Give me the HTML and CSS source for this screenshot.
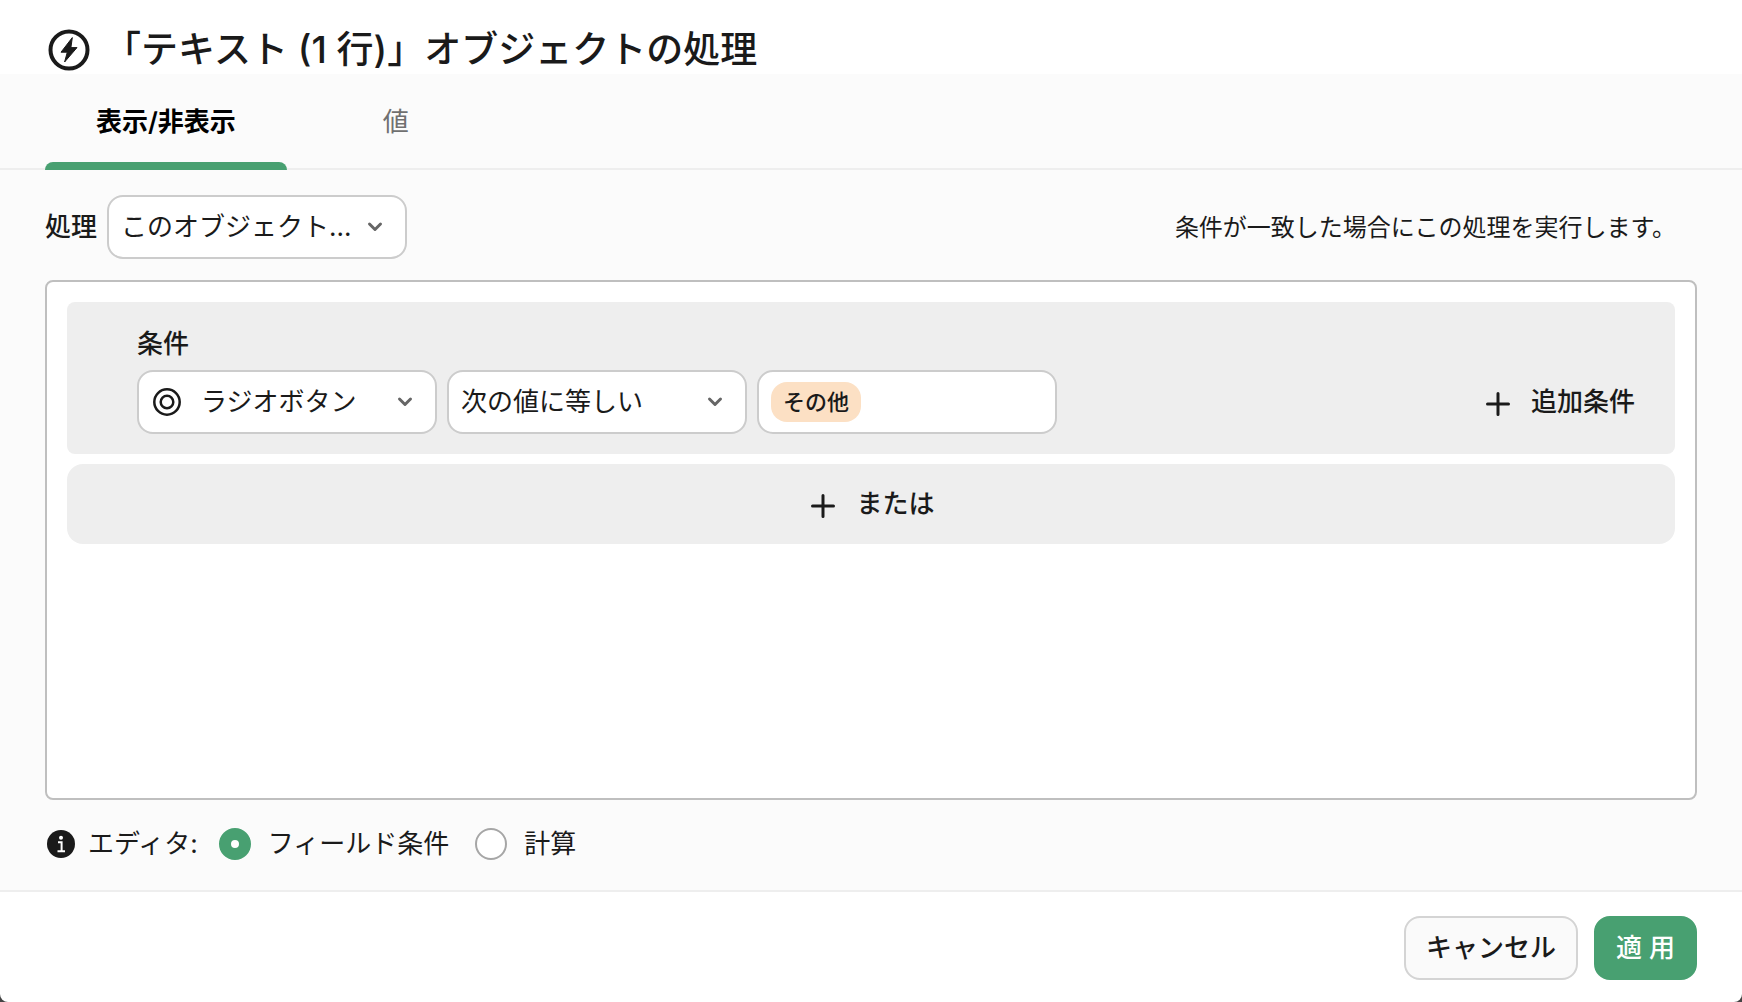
FILE: index.html
```html
<!DOCTYPE html>
<html lang="ja">
<head>
    <meta charset="UTF-8">
    <meta name="viewport" content="width=device-width, initial-scale=1.0">
    <title>オブジェクトの処理</title>
    <link rel="stylesheet" href="styles.css">
</head>
<body>
    <form class="dialog">
        <header class="dialogHeader">
            <svg class="titleIcon" viewBox="0 0 42 42" aria-hidden="true">
                <circle cx="21" cy="21" r="18.5" fill="none" stroke="currentColor" stroke-width="4"/>
                <path d="M24.3 8.6 13 23.2h6.3L16.6 33 29 18.6h-6.1z" fill="currentColor" stroke="currentColor" stroke-width="1" stroke-linejoin="round"/>
            </svg>
            <h1>「テキスト (1 行)」オブジェクトの処理</h1>
        </header>

        <nav class="tabs">
            <button type="button" class="tab activeTab">表示/非表示</button>
            <button type="button" class="tab">値</button>
        </nav>

        <main class="content">
            <div class="actionRow">
                <label for="action">処理</label>
                <div class="field">
                    <select id="action"><option>このオブジェクト...</option></select>
                    <svg class="chevron" viewBox="0 0 16 12" aria-hidden="true"><path d="M2.5 3 8 8.5 13.5 3"/></svg>
                </div>
                <p>条件が一致した場合にこの処理を実行します。</p>
            </div>

            <section class="conditions">
                <div class="group">
                    <label for="source">条件</label>
                    <div class="groupRow">
                        <div class="field">
                            <svg class="ringIcon" viewBox="0 0 28 28" aria-hidden="true"><circle cx="14" cy="14" r="12.7"/><circle cx="14" cy="14" r="6.3"/></svg>
                            <select id="source"><option>ラジオボタン</option></select>
                            <svg class="chevron" viewBox="0 0 16 12" aria-hidden="true"><path d="M2.5 3 8 8.5 13.5 3"/></svg>
                        </div>
                        <div class="field">
                            <select aria-label="比較"><option>次の値に等しい</option></select>
                            <svg class="chevron" viewBox="0 0 16 12" aria-hidden="true"><path d="M2.5 3 8 8.5 13.5 3"/></svg>
                        </div>
                        <div class="field">
                            <span class="tag">その他</span>
                            <input type="text" aria-label="値">
                        </div>
                        <button type="button" class="addBtn">
                            <svg viewBox="0 0 32 32" aria-hidden="true"><path d="M16 7.500v21M5.500 18h21"/></svg>
                            追加条件
                        </button>
                    </div>
                </div>
                <button type="button" class="addBtn orBtn">
                    <svg viewBox="0 0 32 32" aria-hidden="true"><path d="M16 7.500v21M5.500 18h21"/></svg>
                    または
                </button>
            </section>

            <div class="editorRow">
                <svg class="infoIcon" viewBox="0 0 28 28" aria-hidden="true">
                    <circle cx="14" cy="14" r="14" fill="#1a1a1a"/>
                    <circle cx="14" cy="7.800" r="2" fill="#fff"/>
                    <path d="M11 12.300h3.600v9M10.500 21.300h7.500" fill="none" stroke="#fff" stroke-width="2"/>
                </svg>
                <span class="editorLabel">エディタ:</span>
                <label><input type="radio" name="editor" checked>フィールド条件</label>
                <label><input type="radio" name="editor">計算</label>
            </div>
        </main>

        <footer class="dialogFooter">
            <button type="button" class="btn">キャンセル</button>
            <button type="submit" class="btn primaryBtn">適 用</button>
        </footer>
    </form>
</body>
</html>
```
FILE: styles.css
```css
*{margin: 0; padding: 0; box-sizing: border-box;}
body{background-color: #444; color: #1a1a1a; font-family: Inter, "Noto Sans CJK JP", sans-serif; font-size: 26px; line-height: 40px;}
button, input, select{font: inherit; color: inherit; background: none; border: none; outline: none;}
button, select{cursor: pointer;}
svg{flex: none; display: block;}

.dialog{min-height: 100vh; display: flex; flex-direction: column; background-color: #fff; border-radius: 0 0 8px 8px; overflow: hidden;}
.dialogHeader{height: 74px; padding: 26px 44px 0 48px; display: flex; align-items: center; gap: 14px;}
.dialogHeader h1{font-size: 37px; font-weight: 500; line-height: 48px;}
.titleIcon{width: 42px; height: 42px;}

.tabs{height: 96px; padding: 0 45px; display: flex; gap: 45px; background-color: #fbfbfb; box-shadow: inset 0 -2px #eee;}
.tab{padding: 0 51px; color: #707070; position: relative;}
.activeTab{color: #000; font-weight: 600;}
.activeTab::after{content: ""; position: absolute; left: 0; right: 0; bottom: 0; height: 8px; border-radius: 8px 8px 0 0; background-color: #48a071;}

.content{flex: 1; padding: 25px 45px 0; display: flex; flex-direction: column; background-color: #fbfbfb;}
.actionRow{display: flex; align-items: center; gap: 10px; margin-bottom: 21px;}
.actionRow label, .group>label{font-weight: 500;}
.actionRow p{margin-left: auto; padding: 2px 21px 0 0; font-size: 24px;}

.field{width: 300px; height: 64px; padding: 0 22px 0 12px; display: flex; align-items: center; background-color: #fff; border: 2px solid #ccc; border-radius: 16px;}
.field select{flex: 1; min-width: 0; appearance: none;}
.field input{flex: 1; min-width: 0;}
.chevron{width: 16px; height: 12px; fill: none; stroke: #666; stroke-width: 3; stroke-linecap: round; stroke-linejoin: round;}
.ringIcon{width: 28px; height: 28px; margin: 0 20px 0 2px; fill: none; stroke: #1a1a1a; stroke-width: 2.500;}
.tag{padding: 0 12px; border-radius: 16px; background-color: #fce0c4; font-size: 22px; font-weight: 500;}

.conditions{flex: 1; padding: 20px; display: flex; flex-direction: column; gap: 10px; background-color: #fff; border: 2px solid #bfbfbf; border-radius: 8px;}
.group{padding: 20px 40px 20px 70px; background-color: #eee; border-radius: 8px;}
.group>label{display: block; line-height: 44px; margin-bottom: 4px;}
.groupRow{display: flex; align-items: center; gap: 10px;}
.addBtn{display: flex; align-items: center; justify-content: center; gap: 17px; font-weight: 500;}
.addBtn svg{width: 32px; height: 32px; fill: none; stroke: #1a1a1a; stroke-width: 3; stroke-linecap: round;}
.groupRow .addBtn{margin-left: auto;}
.orBtn{height: 80px; background-color: #eee; border-radius: 16px;}

.editorRow{height: 90px; padding: 0 2px 3px; display: flex; align-items: center;}
.editorRow label{display: flex; align-items: center; gap: 17px; margin-right: 26px;}
.editorLabel{margin: 0 21px 0 13px;}
.infoIcon{width: 28px; height: 28px;}
.editorRow input{width: 32px; height: 32px; appearance: none; background-color: #fff; border: 2px solid #a6a6a6; border-radius: 50%;}
.editorRow input:checked{border: 12px solid #48a071;}

.dialogFooter{padding: 24px 45px 22px; display: flex; justify-content: flex-end; gap: 16px; border-top: 2px solid #eee;}
.btn{height: 64px; padding: 0 20px; border: 2px solid #d4d4d4; border-radius: 16px; background-color: #fafafa; font-weight: 500;}
.primaryBtn{border-color: #48a071; background-color: #48a071; color: #fff;}
```
